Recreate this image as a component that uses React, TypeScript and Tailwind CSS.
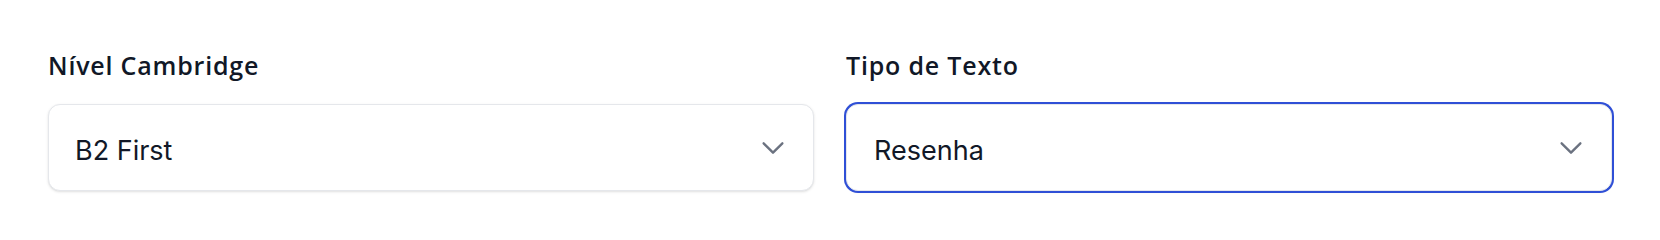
import React from "react";

function Chevron() {
  return (
    <svg width="30" height="30" viewBox="0 0 24 24" fill="none" stroke="#6b7280" strokeWidth="1.9" strokeLinecap="round" strokeLinejoin="round">
      <path d="M19.5 8.25l-7.5 7.5-7.5-7.5" />
    </svg>
  );
}

function Field({ label, value, focused }: { label: string; value: string; focused?: boolean }) {
  return (
    <div className="flex flex-col">
      <label
        className="text-[25px] leading-[32px] font-semibold text-[#111827] tracking-[0.8px]"
        style={{ fontFamily: "'Open Sans', Inter, sans-serif" }}
      >
        {label}
      </label>
      <div
        className={
          focused
            ? "mt-[23px] h-[87px] flex items-center justify-between pl-[27px] pr-[25px] rounded-[12px] bg-white border border-[#e5e7eb] ring-2 ring-[#2f4fd6] shadow-sm"
            : "mt-[23px] h-[87px] flex items-center justify-between pl-[26px] pr-[25px] rounded-[12px] bg-white border border-[#e5e7eb] shadow-sm"
        }
      >
        <span className="text-[27px] leading-[36px] text-[#111827] pt-[6px]">{value}</span>
        <Chevron />
      </div>
    </div>
  );
}

export default function App() {
  return (
    <div className="w-[1660px] h-[240px] bg-white px-12 pt-[49px]" style={{ fontFamily: "Inter, 'Noto Sans', sans-serif" }}>
      <div className="grid grid-cols-2 gap-[32px]">
        <Field label="Nível Cambridge" value="B2 First" />
        <Field label="Tipo de Texto" value="Resenha" focused />
      </div>
    </div>
  );
}
